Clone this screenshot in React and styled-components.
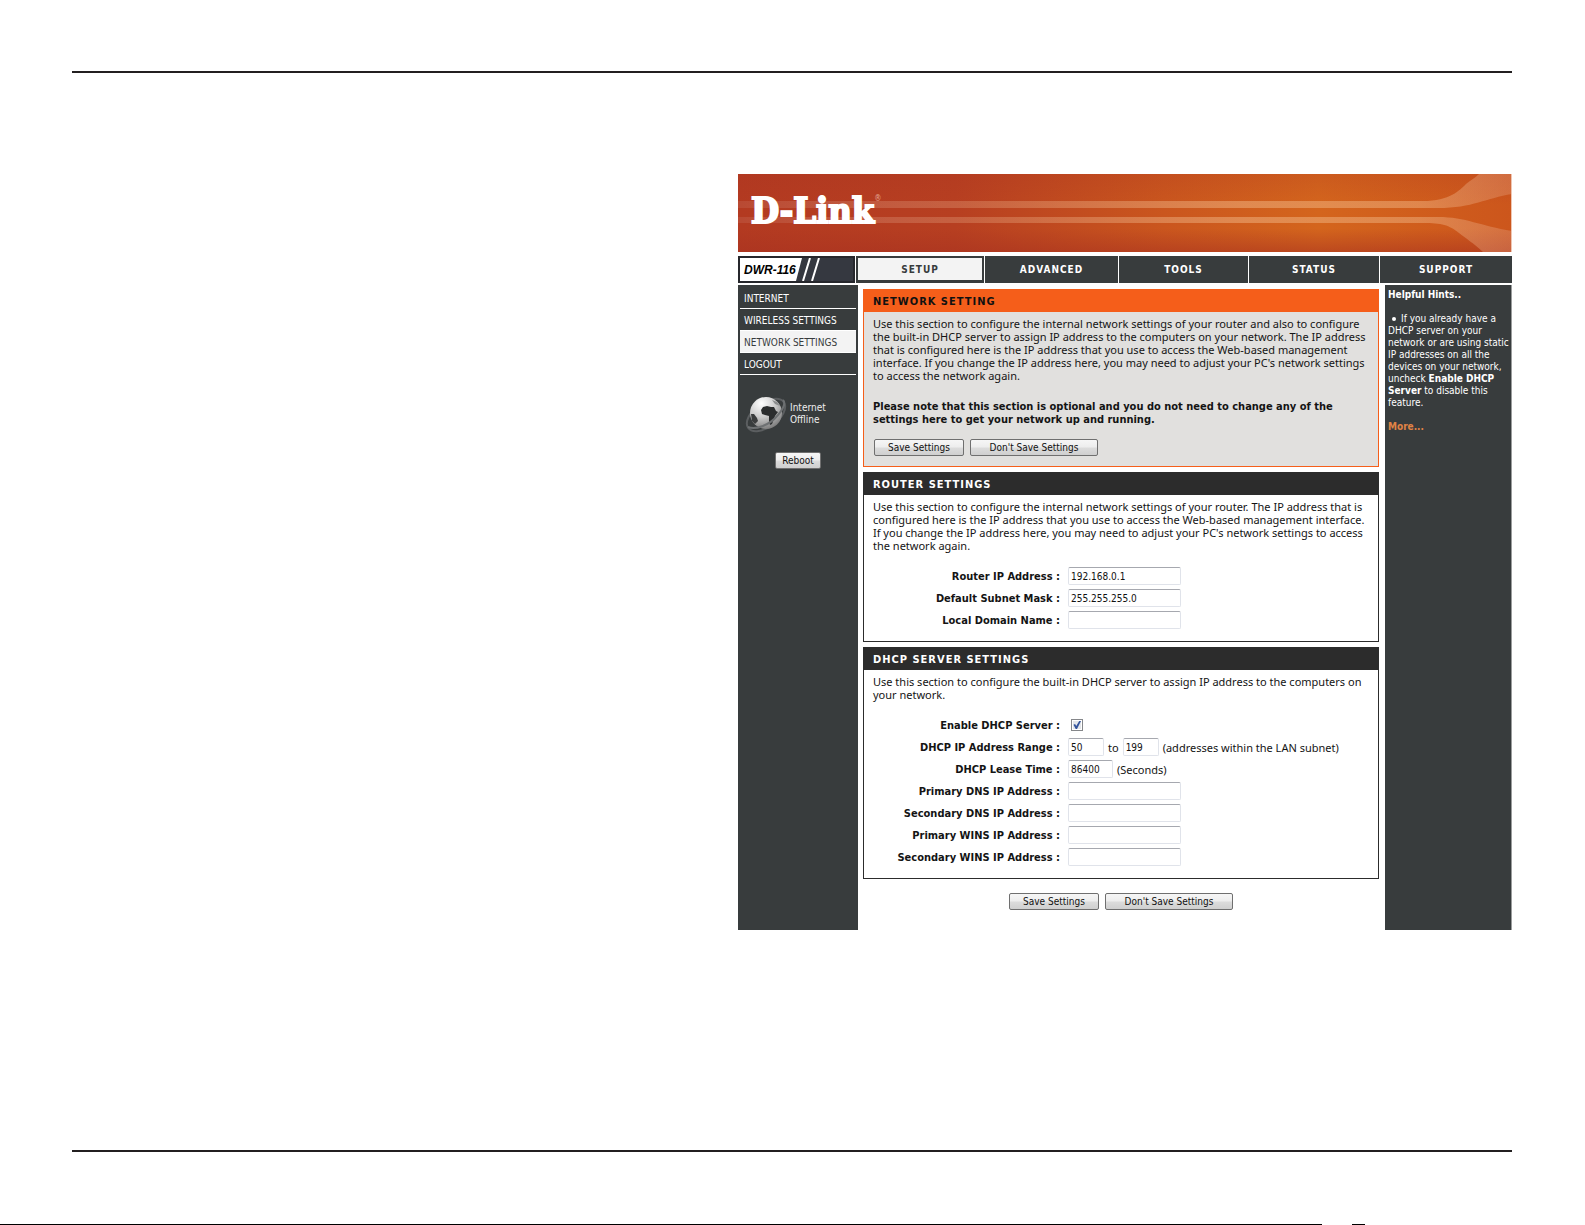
import React from 'react';
import styled, { createGlobalStyle } from 'styled-components';

const ui = "'DejaVu Sans Condensed', 'DejaVu Sans', sans-serif";
const body = "'Noto Sans', 'Open Sans', sans-serif";
const charcoal = '#383c3d';
const ink = '#231f20';

const GlobalStyle = createGlobalStyle`
  *, *::before, *::after { box-sizing: border-box; }
  body { margin: 0; background: #fff; color: #141414; font-family: ${body}; }
  p, h2, h3 { margin: 0; }
`;

const Page = styled.div`
  min-height: 100vh;
  padding-top: 71px;
  display: flex;
  flex-direction: column;
`;

const Rule = styled.hr`
  height: 2px;
  margin: 0 73px 0 72px;
  border: 0;
  background: ${ink};
`;

const Sheet = styled.main`
  flex: 1;
  display: flex;
  justify-content: flex-end;
  align-items: flex-start;
  padding: 101px 73px 101px 72px;
`;

const PageEdge = styled.footer`
  display: flex;
  gap: 30px;
  height: 1px;
  margin-top: 72px;
`;

const EdgeMark = styled.span`
  flex: 0 0 ${(p) => p.$width};
  background: #000;
`;

const Panel = styled.section`
  width: 53.75%;
  min-width: 720px;
  display: flex;
  flex-direction: column;
`;

const Banner = styled.header`
  position: relative;
  height: 78px;
  margin-bottom: 4px;
  padding-left: 13px;
  padding-bottom: 7px;
  display: flex;
  align-items: center;
  overflow: hidden;
`;

const BannerArt = styled.svg`
  position: absolute;
  inset: 0;
  width: 100%;
  height: 100%;
`;

const Logo = styled.span`
  position: relative;
  display: flex;
  align-items: flex-start;
  color: #fff;
  font: bold 36px/36px 'DejaVu Serif Condensed', 'DejaVu Serif', serif;
  -webkit-text-stroke: 2px #fff;
`;

const Registered = styled.sup`
  font: 8px/14px ${ui};
  color: #e3a491;
  -webkit-text-stroke: 0;
`;

const Nav = styled.nav`
  display: grid;
  grid-template-columns: 117fr 128fr 133fr 129fr 130fr 132fr;
  gap: 1px;
  height: 27px;
  margin-bottom: 2px;
`;

const Tab = styled.a`
  display: flex;
  align-items: center;
  justify-content: center;
  padding-top: 2px;
  border: 2px solid ${charcoal};
  border-bottom-width: 3px;
  background: ${(p) => (p.$active ? '#f3f3f3' : charcoal)};
  color: ${(p) => (p.$active ? charcoal : '#fff')};
  font: bold 10px/14px ${ui};
  letter-spacing: 1px;
  text-decoration: none;
`;

const Model = styled.div`
  position: relative;
  display: flex;
  align-items: center;
  padding-left: 4px;
  border: 2px solid #26272c;
  background: #353840;
  overflow: hidden;
`;

const ModelArt = styled.svg`
  position: absolute;
  left: 0;
  top: 0;
  width: 100px;
  height: 23px;
`;

const ModelName = styled.span`
  position: relative;
  color: #000;
  font: italic bold 12px/14px 'Liberation Sans', Arial, sans-serif;
`;

const Columns = styled.div`
  display: grid;
  grid-template-columns: 120px minmax(0, 1fr) 127px;
`;

const Sidebar = styled.aside`
  background: ${charcoal};
  padding: 2px;
  display: flex;
  flex-direction: column;
`;

const SideLink = styled.a`
  height: 22px;
  padding-left: 4px;
  border-bottom: 1px solid #fff;
  background: ${(p) => (p.$active ? '#f3f3f3' : 'transparent')};
  color: ${(p) => (p.$active ? charcoal : '#fff')};
  font: 10px/23px ${ui};
  text-decoration: none;
  white-space: nowrap;
`;

const Connection = styled.div`
  display: flex;
  align-items: center;
  gap: 3px;
  margin: 19px 0 18px 5px;
  color: #eee;
  font: 10px/12px ${ui};
`;

const Button = styled.button`
  height: 17px;
  width: ${(p) => p.$width};
  padding: 0;
  border: 1px solid #6f6f6f;
  border-radius: 2px;
  background: linear-gradient(#f6f6f6, #ededed 48%, #dcdcdc 52%, #cfcfcf);
  color: #111;
  font: 10px/13px ${ui};
`;

const SideAction = styled.div`
  display: flex;
  justify-content: center;
`;

const Main = styled.div`
  padding: 4px 6px 20px 5px;
  display: flex;
  flex-direction: column;
  gap: 5px;
`;

const Box = styled.section`
  border: 1px solid ${(p) => (p.$accent ? '#f55e1a' : '#2c2c2c')};
  background: ${(p) => (p.$accent ? '#e1e0de' : '#fff')};
`;

const BoxTitle = styled.h2`
  margin: -1px -1px 0;
  padding-left: 10px;
  background: ${(p) => (p.$accent ? '#f55e1a' : '#2c2c2c')};
  color: ${(p) => (p.$accent ? '#111' : '#fff')};
  font: bold 11px/26px ${ui};
  height: 23px;
  letter-spacing: 1px;
`;

const BoxBody = styled.div`
  padding: 5px 9px 10px;
`;

const Text = styled.p`
  font: 11px/13px ${body};
  white-space: nowrap;
`;

const Note = styled.p`
  margin: 18px 0 13px;
  font: bold 11px/13px ${ui};
  white-space: nowrap;
`;

const Actions = styled.div`
  display: flex;
  gap: 6px;
  padding-left: 1px;
`;

const FooterActions = styled(Actions)`
  justify-content: center;
  margin-top: 9px;
  padding: 0;
`;

const Form = styled.form`
  margin-top: 13px;
`;

const Row = styled.div`
  display: grid;
  grid-template-columns: 187px 1fr;
  gap: 8px;
  align-items: center;
  height: 22px;
  font: 11px/13px ${body};
`;

const Label = styled.label`
  text-align: right;
  font: bold 11px/13px ${ui};
  white-space: nowrap;
`;

const Controls = styled.div`
  display: flex;
  align-items: center;
  gap: 4px;
`;

const Field = styled.input`
  width: ${(p) => p.$width || '113px'};
  height: 18px;
  padding: 0 2px;
  border: 1px solid #e0e3ea;
  border-top-color: #a6a8af;
  border-radius: 2px;
  background: #fff;
  color: #111;
  font: 10px/14px ${ui};
`;

const Check = styled.input`
  appearance: none;
  width: 12px;
  height: 12px;
  margin: 0 3px;
  padding: 1px;
  border: 1px solid #85878a;
  background: #e3e6ea;
  box-shadow: inset 0 0 0 1px #fff;
  &:checked::before {
    content: '';
    display: block;
    width: 8px;
    height: 8px;
    background: #33549c;
    clip-path: polygon(6% 48%, 26% 38%, 40% 62%, 78% 0, 100% 0, 50% 100%, 34% 100%);
  }
`;

const Hints = styled.aside`
  background: ${charcoal};
  border-right: 1px solid #9b9d9d;
  padding: 4px 0 4px 3px;
  display: flex;
  flex-direction: column;
  gap: 12px;
  color: #fff;
  font: 10px/12px ${ui};
  white-space: nowrap;
`;

const HintTitle = styled.h3`
  font: bold 10px/12px ${ui};
`;

const Bullet = styled.span`
  display: inline-block;
  width: 4px;
  height: 4px;
  margin: 0 5px 1px 4px;
  border-radius: 50%;
  background: #fff;
`;

const More = styled.a`
  color: #e08345;
  font-weight: bold;
  text-decoration: none;
`;

function BannerBackground() {
  return (
    <BannerArt viewBox="0 0 774 78" preserveAspectRatio="none" aria-hidden="true">
      <defs>
        <linearGradient id="base" x1="0" x2="1" y1="0" y2="0">
          <stop offset="0" stopColor="#b33a21" />
          <stop offset="0.28" stopColor="#b73f21" />
          <stop offset="0.55" stopColor="#ca561e" />
          <stop offset="0.75" stopColor="#d4651d" />
          <stop offset="1" stopColor="#cc561c" />
        </linearGradient>
        <linearGradient id="shade" x1="0" x2="0" y1="0" y2="1">
          <stop offset="0" stopColor="#a83220" stopOpacity="0.2" />
          <stop offset="0.4" stopColor="#a83220" stopOpacity="0" />
          <stop offset="0.7" stopColor="#a83220" stopOpacity="0" />
          <stop offset="1" stopColor="#a83220" stopOpacity="0.55" />
        </linearGradient>
        <linearGradient id="beam" gradientUnits="userSpaceOnUse" x1="0" x2="774" y1="0" y2="0">
          <stop offset="0" stopColor="#fff" stopOpacity="0.08" />
          <stop offset="0.3" stopColor="#f6c7a0" stopOpacity="0.25" />
          <stop offset="0.65" stopColor="#f5c090" stopOpacity="0.45" />
          <stop offset="0.88" stopColor="#f5c090" stopOpacity="0.42" />
          <stop offset="1" stopColor="#e8a888" stopOpacity="0.32" />
        </linearGradient>
      </defs>
      <rect width="774" height="78" fill="url(#base)" />
      <rect width="774" height="78" fill="url(#shade)" />
      <path
        d="M0 27H685C712 27 722 16 728 10C733 6 737 4 741 0H774V20C748 24 735 34 700 34H0Z"
        fill="url(#beam)"
      />
      <path
        d="M0 43H700C728 43 742 52 774 57V78H745C735 69 729 65 721 59C711 51 704 49 685 49H0Z"
        fill="url(#beam)"
      />
      <path d="M773.5 0V78" stroke="#efc6b3" />
    </BannerArt>
  );
}

function Globe() {
  return (
    <svg width="42" height="40" viewBox="0 0 42 40" aria-hidden="true">
      <defs>
        <radialGradient id="sphere" cx="0.36" cy="0.2" r="0.85">
          <stop offset="0" stopColor="#fff" />
          <stop offset="0.5" stopColor="#cdcdcd" />
          <stop offset="1" stopColor="#777" />
        </radialGradient>
      </defs>
      <ellipse cx="21" cy="21" rx="22" ry="12" transform="rotate(-36 21 21)" fill="none" stroke="#5b5e60" strokeWidth="2" />
      <circle cx="21" cy="19" r="16" fill="url(#sphere)" />
      <path d="M18 13L22 12L26 13L29 13L31 17L33 18L30 22L29 25L27 30L25 31L24 27L24 22L20 21L17 20L16 16Z" fill="#2b2d2e" />
      <path d="M6 20L9 20L12 24L13 27L10 30L7 27Z" fill="#3a3c3d" />
      <path d="M27 6L32 8L35 12L30 10Z" fill="#8a8c8d" />
      <path d="M3 33C10 36 24 32 33 21C38 15 41 9 38 6" fill="none" stroke="#6d7072" strokeWidth="2" />
    </svg>
  );
}

function SettingField({ id, label, value = '' }) {
  return (
    <Row>
      <Label htmlFor={id}>{label} :</Label>
      <Controls>
        <Field id={id} type="text" defaultValue={value} />
      </Controls>
    </Row>
  );
}

const tabs = ['SETUP', 'ADVANCED', 'TOOLS', 'STATUS', 'SUPPORT'];
const sections = ['INTERNET', 'WIRELESS SETTINGS', 'NETWORK SETTINGS', 'LOGOUT'];

export default function App() {
  return (
    <>
      <GlobalStyle />
      <Page>
        <Rule />
        <Sheet>
          <Panel>
            <Banner>
              <BannerBackground />
              <Logo>
                D-Link<Registered>®</Registered>
              </Logo>
            </Banner>
            <Nav>
              <Model>
                <ModelArt viewBox="0 0 100 23" aria-hidden="true">
                  <path d="M0 0H62L56 23H0Z" fill="#fff" />
                  <path d="M70 0L63 23M79 0L72 23" stroke="#fff" strokeWidth="2" />
                </ModelArt>
                <ModelName>DWR-116</ModelName>
              </Model>
              {tabs.map((name, i) => (
                <Tab key={name} href="#" $active={i === 0}>
                  {name}
                </Tab>
              ))}
            </Nav>
            <Columns>
              <Sidebar>
                {sections.map((name) => (
                  <SideLink key={name} href="#" $active={name === 'NETWORK SETTINGS'}>
                    {name}
                  </SideLink>
                ))}
                <Connection>
                  <Globe />
                  <span>
                    Internet
                    <br />
                    Offline
                  </span>
                </Connection>
                <SideAction>
                  <Button type="button" $width="46px">Reboot</Button>
                </SideAction>
              </Sidebar>
              <Main>
                <Box $accent>
                  <BoxTitle $accent>NETWORK SETTING</BoxTitle>
                  <BoxBody>
                    <Text>
                      Use this section to configure the internal network settings of your router and also to configure
                      <br />
                      the built-in DHCP server to assign IP address to the computers on your network. The IP address
                      <br />
                      that is configured here is the IP address that you use to access the Web-based management
                      <br />
                      interface. If you change the IP address here, you may need to adjust your PC's network settings
                      <br />
                      to access the network again.
                    </Text>
                    <Note>
                      Please note that this section is optional and you do not need to change any of the
                      <br />
                      settings here to get your network up and running.
                    </Note>
                    <Actions>
                      <Button type="button" $width="90px">Save Settings</Button>
                      <Button type="button" $width="128px">Don't Save Settings</Button>
                    </Actions>
                  </BoxBody>
                </Box>
                <Box>
                  <BoxTitle>ROUTER SETTINGS</BoxTitle>
                  <BoxBody>
                    <Text>
                      Use this section to configure the internal network settings of your router. The IP address that is
                      <br />
                      configured here is the IP address that you use to access the Web-based management interface.
                      <br />
                      If you change the IP address here, you may need to adjust your PC's network settings to access
                      <br />
                      the network again.
                    </Text>
                    <Form>
                      <SettingField id="router-ip" label="Router IP Address" value="192.168.0.1" />
                      <SettingField id="subnet" label="Default Subnet Mask" value="255.255.255.0" />
                      <SettingField id="domain" label="Local Domain Name" />
                    </Form>
                  </BoxBody>
                </Box>
                <Box>
                  <BoxTitle>DHCP SERVER SETTINGS</BoxTitle>
                  <BoxBody>
                    <Text>
                      Use this section to configure the built-in DHCP server to assign IP address to the computers on
                      <br />
                      your network.
                    </Text>
                    <Form>
                      <Row>
                        <Label htmlFor="dhcp">Enable DHCP Server :</Label>
                        <Controls>
                          <Check id="dhcp" type="checkbox" defaultChecked />
                        </Controls>
                      </Row>
                      <Row>
                        <Label htmlFor="range-from">DHCP IP Address Range :</Label>
                        <Controls>
                          <Field id="range-from" type="text" $width="36px" defaultValue="50" />
                          <label htmlFor="range-to">to</label>
                          <Field id="range-to" type="text" $width="36px" defaultValue="199" />
                          <span>(addresses within the LAN subnet)</span>
                        </Controls>
                      </Row>
                      <Row>
                        <Label htmlFor="lease">DHCP Lease Time :</Label>
                        <Controls>
                          <Field id="lease" type="text" $width="45px" defaultValue="86400" />
                          <span>(Seconds)</span>
                        </Controls>
                      </Row>
                      <SettingField id="dns1" label="Primary DNS IP Address" />
                      <SettingField id="dns2" label="Secondary DNS IP Address" />
                      <SettingField id="wins1" label="Primary WINS IP Address" />
                      <SettingField id="wins2" label="Secondary WINS IP Address" />
                    </Form>
                  </BoxBody>
                </Box>
                <FooterActions>
                  <Button type="button" $width="90px">Save Settings</Button>
                  <Button type="button" $width="128px">Don't Save Settings</Button>
                </FooterActions>
              </Main>
              <Hints>
                <HintTitle>Helpful Hints..</HintTitle>
                <p>
                  <Bullet />
                  If you already have a
                  <br />
                  DHCP server on your
                  <br />
                  network or are using static
                  <br />
                  IP addresses on all the
                  <br />
                  devices on your network,
                  <br />
                  uncheck <b>Enable DHCP</b>
                  <br />
                  <b>Server</b> to disable this
                  <br />
                  feature.
                </p>
                <More href="#">More...</More>
              </Hints>
            </Columns>
          </Panel>
        </Sheet>
        <Rule />
        <PageEdge>
          <EdgeMark $width="83.4%" />
          <EdgeMark $width="13px" />
        </PageEdge>
      </Page>
    </>
  );
}
